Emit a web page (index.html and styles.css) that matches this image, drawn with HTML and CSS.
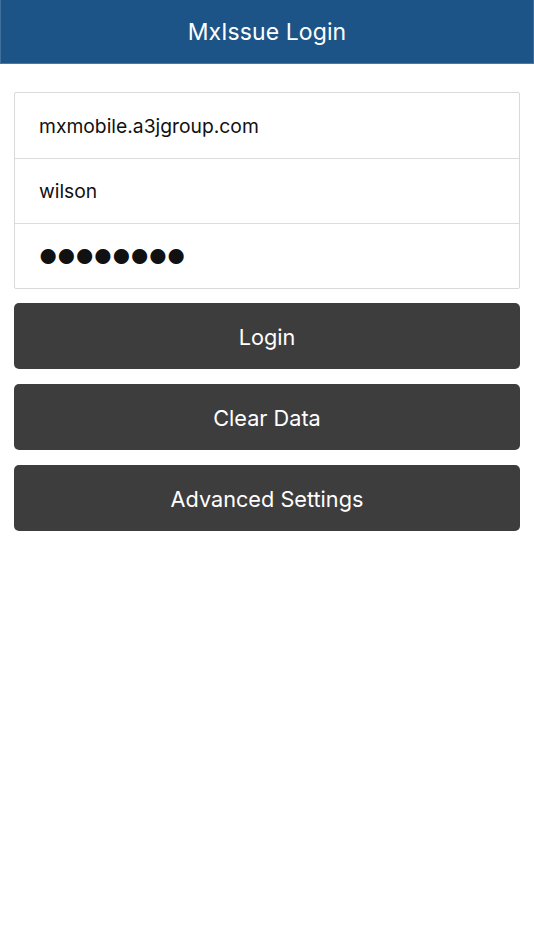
FILE: index.html
```html
<!DOCTYPE html>
<html>
<head>
<meta charset="utf-8">
<link rel="stylesheet" href="styles.css">
</head>
<body>
<header class="bar"><h1 class="title">MxIssue Login</h1></header>
<main class="content">
  <div class="fields">
    <div class="field">mxmobile.a3jgroup.com</div>
    <div class="field">wilson</div>
    <div class="field dots">●●●●●●●●</div>
  </div>
  <button class="btn">Login</button>
  <button class="btn">Clear Data</button>
  <button class="btn">Advanced Settings</button>
</main>
</body>
</html>
```
FILE: styles.css
```css
html, body { margin: 0; padding: 0; background: #fff; }
body { font-family: Inter, "Noto Sans", sans-serif; width: 534px; }
.bar {
  background: #1d5488;
  border-bottom: 1px solid #4a79a6;
  border-left: 1px solid #3f6f9d;
  border-right: 1px solid #3f6f9d;
  box-sizing: border-box;
  height: 64px;
  display: flex;
  align-items: center;
  justify-content: center;
}
.title { margin: 0; color: #fff; font-weight: 400; font-size: 23px; letter-spacing: 0.1px; }
.content { padding: 28px 14px 0 14px; display: flex; flex-direction: column; }
.fields { border: 1px solid #d9d9d9; border-radius: 2px; margin-bottom: 14px; }
.field {
  height: 65px; box-sizing: border-box; padding-left: 24px;
  display: flex; align-items: center;
  font-size: 19.3px; color: #111;
  border-top: 1px solid #dcdcdc;
}
.field:first-child { border-top: none; }
.dots { font-size: 20px; letter-spacing: 0; color: #111; padding-top: 2px; }
.btn {
  height: 66px; margin-bottom: 15px; border: none; border-radius: 5px;
  background: #3d3d3d; color: #fff; font-family: inherit; font-size: 21.7px;
  font-weight: 400; padding: 2px 0 0 0;
}
```
